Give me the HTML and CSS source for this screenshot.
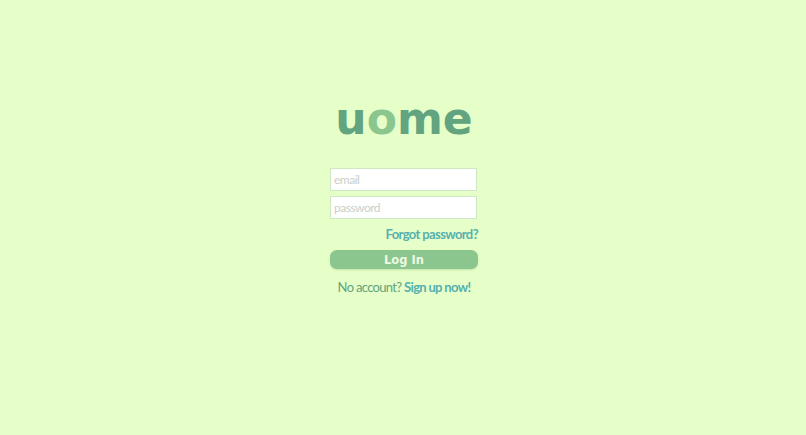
FILE: index.html
```html
<!DOCTYPE html>
<html lang="en">
<head>
<meta charset="utf-8">
<title>uome</title>
<link rel="stylesheet" href="styles.css">
</head>
<body>
<main class="login">
  <h1 class="logo">u<span class="logo-o">o</span>me</h1>
  <form class="form">
    <input class="field" type="text" placeholder="email">
    <input class="field" type="password" placeholder="password">
    <a class="forgot" href="#">Forgot password?</a>
    <button class="submit" type="button">Log In</button>
  </form>
  <p class="signup">No account? <a href="#">Sign up now!</a></p>
</main>
</body>
</html>
```
FILE: styles.css
```css
html, body {
  margin: 0;
  height: 100%;
}
body {
  background: #e6ffc8;
  font-family: Lato, "Noto Sans", sans-serif;
  overflow: hidden;
}
.login {
  display: flex;
  flex-direction: column;
  align-items: center;
  padding: 93px 0 0 2px;
}
.logo {
  margin: 0;
  font-family: "DejaVu Sans", sans-serif;
  font-weight: 700;
  font-size: 44px;
  line-height: 51px;
  color: #62a380;
}
.logo-o {
  color: #8bc68f;
}
.form {
  display: flex;
  flex-direction: column;
  width: 148px;
  margin-top: 24px;
}
.field {
  box-sizing: border-box;
  width: 147px;
  height: 23px;
  margin: 0 0 5px;
  padding: 0 3px;
  border: 1px solid #cfe8c4;
  background: #fff;
  font-family: inherit;
  font-size: 12px;
  letter-spacing: -0.5px;
  outline: none;
}
.field::placeholder {
  color: #c9cfc9;
}
.forgot {
  align-self: flex-end;
  font-size: 13px;
  letter-spacing: -0.62px;
  line-height: 20px;
  font-weight: 700;
  color: #56b0ae;
  text-decoration: none;
}
.submit {
  height: 19px;
  margin-top: 6px;
  padding: 0;
  border: 0;
  border-radius: 7px;
  background: #8bc68f;
  box-shadow: 0 1px 2px rgba(120, 160, 120, .3);
  color: #eef9e2;
  font-family: "DejaVu Sans", sans-serif;
  font-weight: 700;
  font-size: 11.5px;
}
.signup {
  margin: 8px 0 0;
  font-size: 13px;
  letter-spacing: -0.68px;
  line-height: 20px;
  color: #62a380;
}
.signup a {
  font-weight: 700;
  color: #56b0ae;
  text-decoration: none;
}
```
